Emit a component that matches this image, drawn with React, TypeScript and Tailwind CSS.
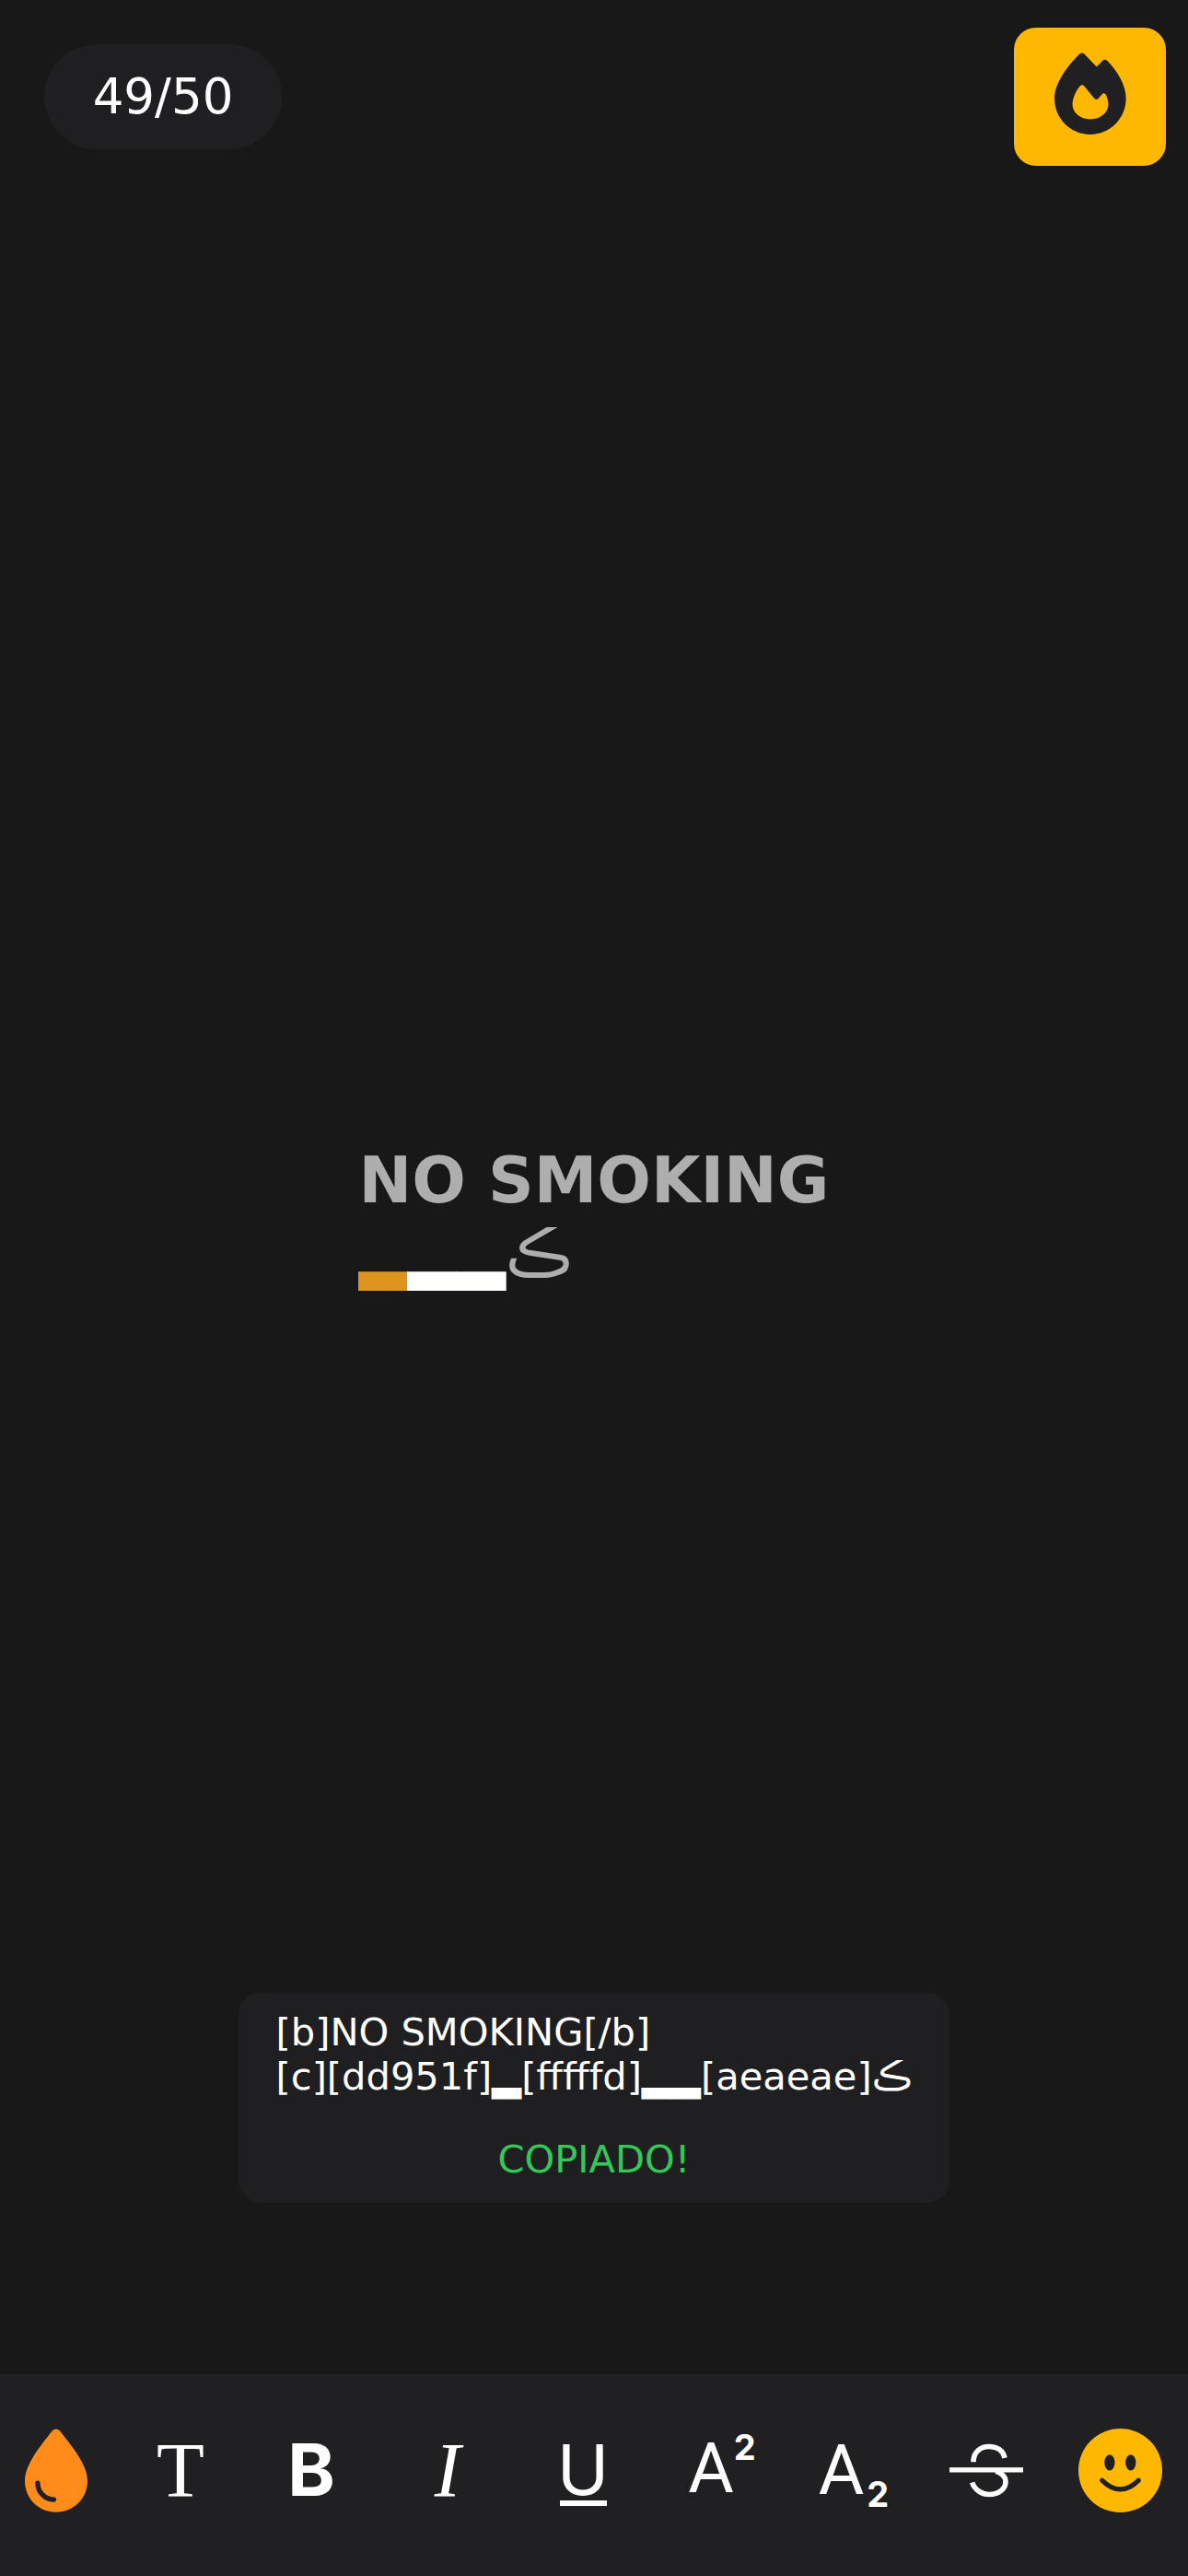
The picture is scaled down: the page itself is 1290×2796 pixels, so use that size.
const dejavu = "font-['DejaVu_Sans',sans-serif]";

function FlameIcon() {
  return (
    <svg viewBox="195 140 235 268" className="w-[78px] h-[89px]">
      <path
        fillRule="evenodd"
        fill="#202022"
        d="M277 145 Q285 138 293 145 L333 187 L352 167 Q360 160 368 167 C400 200 429 245 429 290 C429 355 377 408 312 408 C247 408 195 355 195 290 C195 240 240 180 277 145 Z M279 249 Q286 243 292 249 L325 290 Q332 297 339 290 L351 276 Q358 270 363 278 C369 290 371 300 371 310 C371 337 345 358 312 358 C280 358 254 337 254 310 C254 290 265 265 279 249 Z"
      />
    </svg>
  );
}

function DropIcon() {
  return (
    <svg viewBox="82 195 205 273" className="w-[68px] h-[91px]">
      <path
        fill="#ff8c1a"
        d="M172 201 Q184 190 196 201 C230 245 287 310 287 365 C287 425 240 468 184 468 C128 468 82 425 82 365 C82 310 138 245 172 201 Z"
      />
      <path d="M124 373 C124 400 145 425 177 427" fill="none" stroke="#202022" strokeWidth="16" strokeLinecap="round" />
    </svg>
  );
}

function StrikeIcon() {
  return (
    <svg viewBox="543 245 240 182" className="w-[80px] h-[61px]">
      <rect x="543" y="326" width="240" height="16" fill="#ffffff" />
      <path d="M621 308 C621 272 648 258 672 258 C700 258 718 272 723 295" fill="none" stroke="#ffffff" strokeWidth="17" />
      <path d="M617 375 C625 400 650 414 672 414 C705 414 726 395 726 372 C726 356 714 345 694 338" fill="none" stroke="#ffffff" strokeWidth="17" />
    </svg>
  );
}

function SmileIcon() {
  return (
    <svg viewBox="963 197 274 274" className="w-[91px] h-[91px]">
      <circle cx="1100" cy="334" r="137" fill="#ffb800" />
      <ellipse cx="1065" cy="308" rx="17" ry="26" fill="#202022" />
      <ellipse cx="1134" cy="308" rx="17" ry="26" fill="#202022" />
      <path d="M1040 366 Q1100 425 1160 366" fill="none" stroke="#202022" strokeWidth="15" strokeLinecap="round" />
    </svg>
  );
}

export default function App() {
  return (
    <div className="w-[1290px] h-[2796px] bg-[#181818] flex flex-col overflow-hidden text-white">
      {/* Top bar */}
      <div className="flex justify-between items-start pt-[30px] pl-[48px] pr-[24px] h-[180px]">
        <div className={`mt-[18px] w-[258px] h-[114px] rounded-full bg-[#1f1f21] flex items-center justify-center text-[53px] ${dejavu}`}>
          49/50
        </div>
        <div className="w-[165px] h-[150px] pb-[7px] rounded-[24px] bg-[#ffb800] flex items-center justify-center">
          <FlameIcon />
        </div>
      </div>

      {/* Preview */}
      <div className={`mt-[1061px] w-fit mx-auto text-[69px] leading-[81px] text-[#aeaeae] ${dejavu}`}>
        <div className="font-bold">NO SMOKING</div>
        <div className="-mt-[2px]">
          <span className="text-[#dd951f]">▂</span>
          <span className="text-[#fffffd]">▂▂</span>
          <span>ڪ</span>
        </div>
      </div>

      {/* Copied code */}
      <div className={`mt-[762px] w-fit mx-auto rounded-[24px] bg-[#1f1f21] px-[41px] pt-[19px] h-[228px] text-[41.6px] leading-[48px] ${dejavu}`}>
        <div>[b]NO SMOKING[/b]</div>
        <div>[c][dd951f]▂[fffffd]▂▂[aeaeae]ڪ</div>
        <div className="mt-[42px] text-center text-[#34c759]">COPIADO!</div>
      </div>

      {/* Format toolbar */}
      <div className="mt-auto h-[219px] bg-[#202022] flex items-start pl-[15px] pt-[58px]">
        <div className="w-[92px] h-[92px] flex items-center justify-center">
          <DropIcon />
        </div>
        <div className="ml-[43px] w-[92px] h-[92px] flex items-center justify-center text-[85px] leading-none font-['Liberation_Serif',serif]">
          T
        </div>
        <div className="ml-[50px] w-[92px] h-[92px] flex items-center justify-center text-[78px] leading-none font-bold font-['Inter',sans-serif]">
          B
        </div>
        <div className="ml-[56px] w-[92px] h-[92px] flex items-center justify-center text-[85px] leading-none italic font-['Liberation_Serif',serif]">
          I
        </div>
        <div className="ml-[55px] w-[92px] h-[92px] pt-[8px] flex flex-col items-center justify-center font-['Inter',sans-serif]">
          <span className="text-[76px] leading-[60px]">U</span>
          <div className="mt-[4px] w-[51px] h-[6px] bg-white" />
        </div>
        <div className="ml-[59px] w-[92px] h-[92px] flex items-start justify-center font-['Roboto',sans-serif]">
          <span className="mt-[14px] text-[76px] leading-[60px]">A</span>
          <span className="mt-[2px] text-[38px] leading-none font-bold font-['Inter',sans-serif]">2</span>
        </div>
        <div className="ml-[51px] w-[92px] h-[92px] flex items-end justify-center font-['Roboto',sans-serif]">
          <span className="mb-[16px] text-[76px] leading-[60px]">A</span>
          <span className="mb-[1px] ml-[3px] text-[38px] leading-none font-bold font-['Inter',sans-serif]">2</span>
        </div>
        <div className="ml-[52px] w-[92px] h-[92px] flex items-center justify-center">
          <StrikeIcon />
        </div>
        <div className="ml-[53px] w-[92px] h-[92px] flex items-center justify-center">
          <SmileIcon />
        </div>
      </div>
    </div>
  );
}
